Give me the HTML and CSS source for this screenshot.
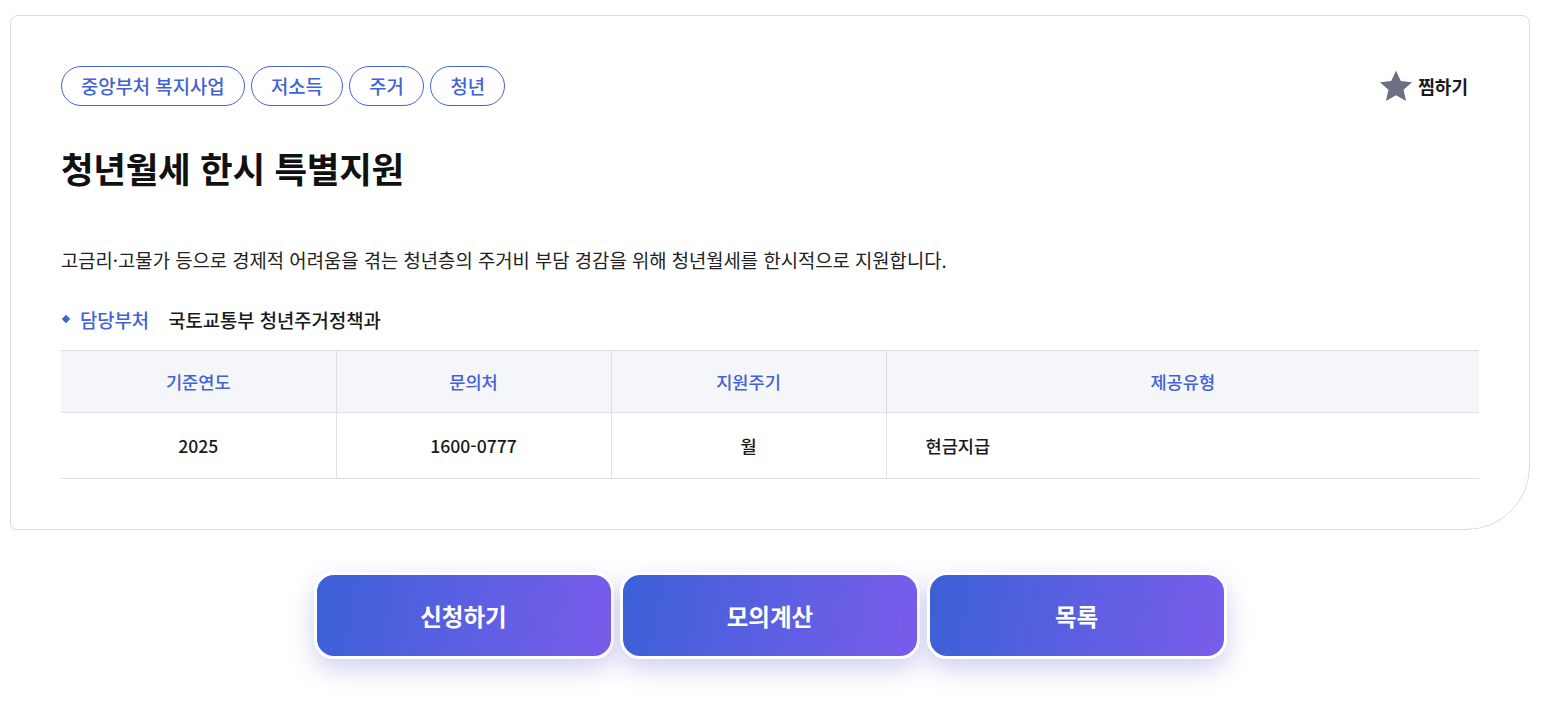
FILE: index.html
```html
<!DOCTYPE html>
<html lang="ko">
<head>
<meta charset="utf-8">
<title>청년월세 한시 특별지원</title>
<link rel="stylesheet" href="styles.css">
</head>
<body>
<div class="page">
  <section class="card">
    <div class="top-row">
      <ul class="tags">
        <li class="tag">중앙부처 복지사업</li>
        <li class="tag">저소득</li>
        <li class="tag">주거</li>
        <li class="tag">청년</li>
      </ul>
      <button class="fav" type="button">
        <svg class="star" viewBox="0 0 24 24" width="36" height="35" aria-hidden="true"><path d="M12 1.2l3.3 7.1 7.7.8-5.8 5.2 1.7 7.6L12 18l-6.9 3.9 1.7-7.6L1 9.1l7.7-.8z" fill="#6c7083"/></svg>
        <span>찜하기</span>
      </button>
    </div>
    <h1 class="title">청년월세 한시 특별지원</h1>
    <p class="desc">고금리·고물가 등으로 경제적 어려움을 겪는 청년층의 주거비 부담 경감을 위해 청년월세를 한시적으로 지원합니다.</p>
    <div class="dept">
      <span class="bullet"></span>
      <span class="dept-label">담당부처</span>
      <span class="dept-value">국토교통부 청년주거정책과</span>
    </div>
    <table class="info">
      <thead>
        <tr>
          <th class="c1">기준연도</th>
          <th class="c2">문의처</th>
          <th class="c3">지원주기</th>
          <th class="c4">제공유형</th>
        </tr>
      </thead>
      <tbody>
        <tr>
          <td>2025</td>
          <td>1600-0777</td>
          <td>월</td>
          <td class="left">현금지급</td>
        </tr>
      </tbody>
    </table>
  </section>
  <div class="actions">
    <button class="btn" type="button">신청하기</button>
    <button class="btn" type="button">모의계산</button>
    <button class="btn" type="button">목록</button>
  </div>
</div>
</body>
</html>
```
FILE: styles.css
```css
* { box-sizing: border-box; }
html, body { margin: 0; padding: 0; background: #fff; }
body {
  font-family: "Noto Sans CJK KR", "Noto Sans", "Liberation Sans", sans-serif;
  color: #1a1a1a;
}
.page { padding: 15px 12px 40px 10px; }

.card {
  border: 1px solid #dcdcdc;
  border-radius: 8px 8px 64px 6px;
  padding: 50px 50px 50px 50px;
  background: #fff;
}

.top-row {
  display: flex;
  align-items: center;
  justify-content: space-between;
  height: 40px;
}
.tags {
  display: flex;
  gap: 6.5px;
  list-style: none;
  margin: 0;
  padding: 0;
}
.tag {
  height: 40px;
  line-height: 38px;
  padding: 0 19px;
  border: 1px solid #4264d6;
  border-radius: 20px;
  color: #4262d6;
  font-size: 18.8px;
  font-weight: 500;
  white-space: nowrap;
}
.fav {
  display: flex;
  align-items: center;
  gap: 4px;
  background: none;
  border: 0;
  padding: 0 11px 0 0;
  font-family: inherit;
  font-size: 18px;
  font-weight: 700;
  color: #1a1a1a;
  cursor: pointer;
}
.star { display: block; margin-left: -2px; }

.title {
  margin: 37px 0 0;
  font-size: 35.5px;
  line-height: 50px;
  font-weight: 700;
  color: #111;
  letter-spacing: -0.3px;
}
.desc {
  margin: 53px 0 0;
  font-size: 18.8px;
  line-height: 28px;
  color: #222;
}
.dept {
  display: flex;
  align-items: center;
  margin-top: 32px;
  height: 26px;
  font-size: 18.8px;
  font-weight: 500;
}
.bullet {
  width: 6px;
  height: 6px;
  background: #4262d6;
  transform: rotate(45deg);
  margin: 0 11px 0 2px;
}
.dept-label { color: #4262d6; margin-right: 19px; }
.dept-value { color: #1a1a1a; }

.info {
  margin-top: 18px;
  width: 100%;
  border-collapse: collapse;
  font-size: 17.6px;
}
.info th, .info td {
  text-align: center;
  font-weight: 500;
}
.info thead tr {
  background: #f5f6fa;
  border-top: 1px solid #dedfe3;
  border-bottom: 1px solid #dedfe3;
}
.info th {
  height: 62px;
  color: #4262d6;
  border-left: 1px solid #dedfe3;
}
.info th:first-child, .info td:first-child { border-left: 0; }
.info .c1, .info .c2, .info .c3 { width: 275px; }
.info tbody tr { border-bottom: 1px solid #dedfe3; }
.info td {
  height: 66px;
  color: #1a1a1a;
  border-left: 1px solid #e2e2e2;
}
.info td.left { text-align: left; padding-left: 39px; }

.actions {
  display: flex;
  justify-content: center;
  gap: 6.5px;
  margin-top: 42px;
}
.btn {
  width: 300px;
  height: 87px;
  border: 3px solid #fff;
  border-radius: 20px;
  background: linear-gradient(100deg, #3b60d7 0%, #5b5fe2 50%, #7a5ceb 100%);
  color: #fff;
  font-family: inherit;
  font-size: 23.5px;
  font-weight: 700;
  box-shadow: 0 10px 24px rgba(90, 90, 200, 0.28);
  cursor: pointer;
}
```
